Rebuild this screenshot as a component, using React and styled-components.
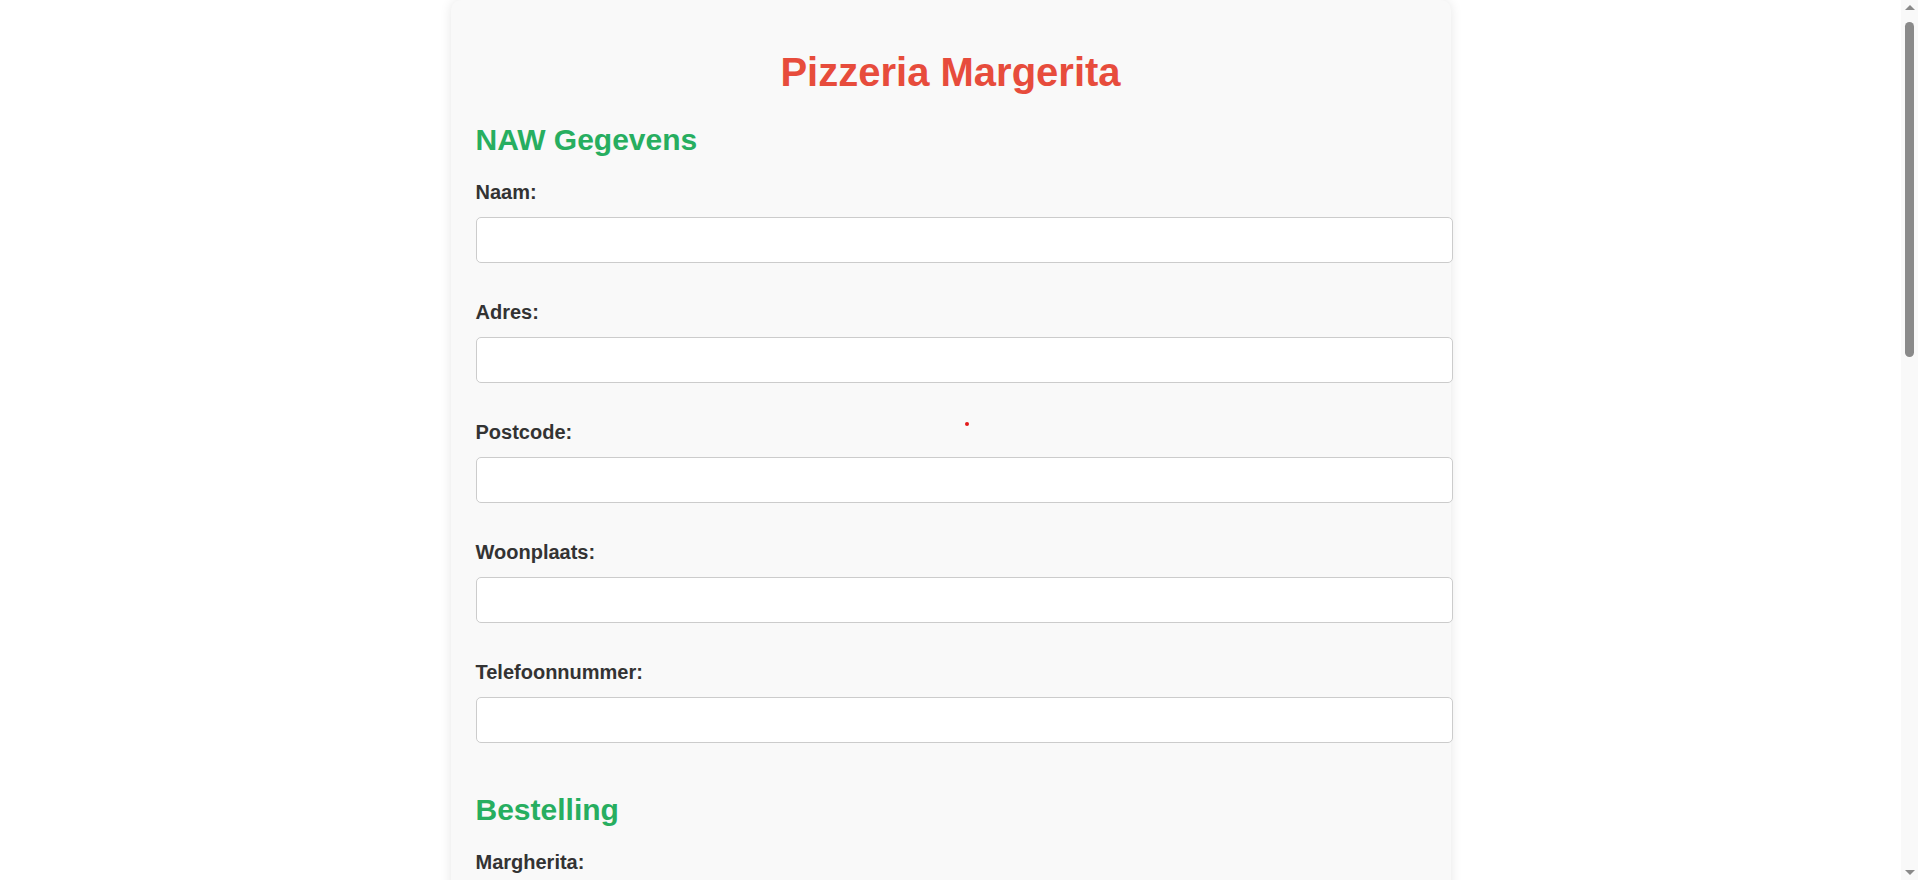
import React from 'react'
import styled, { createGlobalStyle } from 'styled-components'

const GlobalStyle = createGlobalStyle`
  html {
    scrollbar-width: none;
  }
  html::-webkit-scrollbar {
    display: none;
  }
  html, body {
    margin: 0;
    padding: 0;
    background: #ffffff;
    font-family: "Liberation Sans", Arial, sans-serif;
  }
  body {
    margin-right: 17px;
  }
`

const NAW = ['Naam', 'Adres', 'Postcode', 'Woonplaats', 'Telefoonnummer']
const PIZZAS = [
  'Margherita',
  'Funghi',
  'Marina',
  'Hawaii',
  'Quattro Formaggi',
  'Pepperoni',
  'Calzone',
  'Vegetariana',
  'Tonno',
]

function App() {
  return (
    <>
      <GlobalStyle />
      <Card>
        <Title>Pizzeria Margerita</Title>

        <Section>
          <SectionTitle>NAW Gegevens</SectionTitle>
          {NAW.map((field) => (
            <Group key={field}>
              <Label htmlFor={field}>{field}:</Label>
              <Input id={field} type="text" />
            </Group>
          ))}
        </Section>

        <Section>
          <SectionTitle>Bestelling</SectionTitle>
          {PIZZAS.map((pizza) => (
            <Group key={pizza}>
              <Label htmlFor={pizza}>{pizza}:</Label>
              <Input id={pizza} type="number" min="0" />
            </Group>
          ))}
        </Section>

        <Submit type="submit">Bestellen</Submit>
        <Dot />
      </Card>

      <ScrollTrack aria-hidden="true">
        <ArrowUp />
        <Thumb />
        <ArrowDown />
      </ScrollTrack>
    </>
  )
}

const Card = styled.form`
  position: relative;
  box-sizing: border-box;
  max-width: 1000px;
  margin: 0 auto;
  padding: 23px 25px 50px;
  background: #f9f9f9;
  border-radius: 10px;
  box-shadow: 0 0 12px rgba(0, 0, 0, 0.1);
`

const Title = styled.h1`
  margin: 27px 0 28px;
  font-size: 40px;
  font-weight: bold;
  color: #e74c3c;
  text-align: center;
`

const Section = styled.section`
  & + & {
    padding-top: 12px;
  }
`

const SectionTitle = styled.h2`
  margin: 0 0 24px;
  font-size: 30px;
  font-weight: bold;
  color: #27ae60;
`

const Group = styled.div`
  margin-bottom: 38px;
`

const Label = styled.label`
  display: block;
  margin-bottom: 13px;
  font-size: 20px;
  font-weight: bold;
  color: #333333;
`

const Input = styled.input`
  display: block;
  width: 100%;
  height: 19px;
  padding: 12.5px;
  border: 1px solid #cccccc;
  border-radius: 5px;
  background: #ffffff;
  font-family: "Liberation Sans", Arial, sans-serif;
  font-size: 16.7px;
  color: #333333;
  outline: none;
`

const Submit = styled.button`
  display: block;
  width: 100%;
  padding: 14px;
  border: none;
  border-radius: 5px;
  background: #27ae60;
  color: #ffffff;
  font-family: "Liberation Sans", Arial, sans-serif;
  font-size: 20px;
  font-weight: bold;
  cursor: pointer;
`

const Dot = styled.span`
  position: absolute;
  left: 514px;
  top: 422px;
  width: 4px;
  height: 4px;
  border-radius: 50%;
  background: #e31b1b;
`

const ScrollTrack = styled.div`
  position: fixed;
  top: 0;
  right: 0;
  bottom: 0;
  width: 17px;
  display: flex;
  flex-direction: column;
  align-items: center;
  background: #f9f9f9;
`

const ArrowUp = styled.span`
  margin-top: 5px;
  width: 0;
  height: 0;
  border-left: 5px solid transparent;
  border-right: 5px solid transparent;
  border-bottom: 5px solid #8a8a8a;
`

const Thumb = styled.span`
  margin-top: 12px;
  width: 9px;
  height: 335px;
  border-radius: 5px;
  background: #8a8a8a;
`

const ArrowDown = styled.span`
  margin-top: auto;
  margin-bottom: 5px;
  width: 0;
  height: 0;
  border-left: 5px solid transparent;
  border-right: 5px solid transparent;
  border-top: 5px solid #8a8a8a;
`

export default App
